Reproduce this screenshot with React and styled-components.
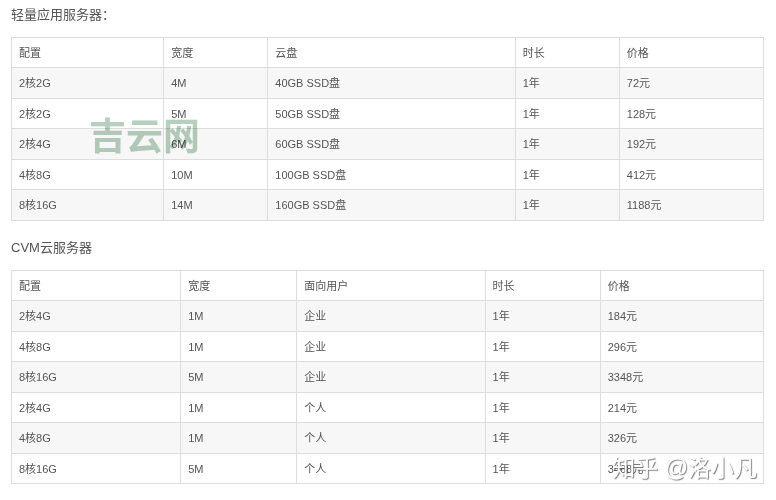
import React from 'react';
import styled, { createGlobalStyle } from 'styled-components';

const lightServers = {
    title: '轻量应用服务器：',
    widths: [152, 104, 247, 104, 144],
    head: ['配置', '宽度', '云盘', '时长', '价格'],
    rows: [
        ['2核2G', '4M', '40GB SSD盘', '1年', '72元'],
        ['2核2G', '5M', '50GB SSD盘', '1年', '128元'],
        ['2核4G', '6M', '60GB SSD盘', '1年', '192元'],
        ['4核8G', '10M', '100GB SSD盘', '1年', '412元'],
        ['8核16G', '14M', '160GB SSD盘', '1年', '1188元'],
    ],
}

const cvmServers = {
    title: 'CVM云服务器',
    widths: [169, 116, 188, 115, 163],
    head: ['配置', '宽度', '面向用户', '时长', '价格'],
    rows: [
        ['2核4G', '1M', '企业', '1年', '184元'],
        ['4核8G', '1M', '企业', '1年', '296元'],
        ['8核16G', '5M', '企业', '1年', '3348元'],
        ['2核4G', '1M', '个人', '1年', '214元'],
        ['4核8G', '1M', '个人', '1年', '326元'],
        ['8核16G', '5M', '个人', '1年', '3468元'],
    ],
}

function PriceTable({id, title, widths, head, rows}) {
    const total = widths.reduce((a, b) => a + b, 0);

    return (
        <Section>
            <Title id={id}>{title}</Title>
            <Table aria-labelledby={id}>
                <colgroup>
                    {widths.map((w, i) => (
                        <Col key={i} $share={w / total} />
                    ))}
                </colgroup>
                <tbody>
                    <Row>
                        {head.map((text) => (
                            <HeadCell key={text} scope="col">{text}</HeadCell>
                        ))}
                    </Row>
                    {rows.map((row, i) => (
                        <Row key={i}>
                            {row.map((text, j) => (
                                <Cell key={j}>{text}</Cell>
                            ))}
                        </Row>
                    ))}
                </tbody>
            </Table>
        </Section>
    )
}

function App() {
    return (
        <>
            <GlobalStyle />
            <Page>
                <PriceTable id="light" {...lightServers} />
                <PriceTable id="cvm" {...cvmServers} />
                <SiteMark>吉云网</SiteMark>
                <AuthorMark>知乎 @洛小凡</AuthorMark>
            </Page>
        </>
    )
}

export default App

const GlobalStyle = createGlobalStyle`
    body {
        margin: 0;
        background: #fff;
        color: #555;
        font-family: "Liberation Sans", "Noto Sans CJK SC", sans-serif;
    }
`

const Page = styled.main`
    position: relative;
    padding: 5px 12px 15px 11px;
`

const Section = styled.section`
    & + & {
        margin-top: 17px;
    }
`

const Title = styled.h2`
    margin: 0 0 12px;
    font-size: 13px;
    line-height: 20px;
    font-weight: normal;
`

const Table = styled.table`
    width: 100%;
    table-layout: fixed;
    border-collapse: collapse;
    font-size: 11px;
    line-height: 16px;
`

const Col = styled.col`
    width: ${props => props.$share * 100}%;
`

const Row = styled.tr`
    height: 30px;
    &:nth-child(even) {
        height: 31px;
        background: #f7f7f7;
    }
`

const Cell = styled.td`
    padding: 0 7px;
    border: 1px solid #ddd;
    text-align: left;
    font-weight: normal;
`

const HeadCell = styled(Cell).attrs({ as: 'th' })``

const SiteMark = styled.div`
    position: absolute;
    left: 89px;
    top: 118px;
    color: #b7cfbe;
    font-size: 37px;
    line-height: 40px;
    font-weight: bold;
    mix-blend-mode: multiply;
    pointer-events: none;
`

const AuthorMark = styled.div`
    position: absolute;
    right: 19px;
    bottom: 15px;
    color: #fff;
    font-size: 23px;
    line-height: 32px;
    text-shadow: 1px 1px 1px rgba(0, 0, 0, 0.5);
    pointer-events: none;
`
